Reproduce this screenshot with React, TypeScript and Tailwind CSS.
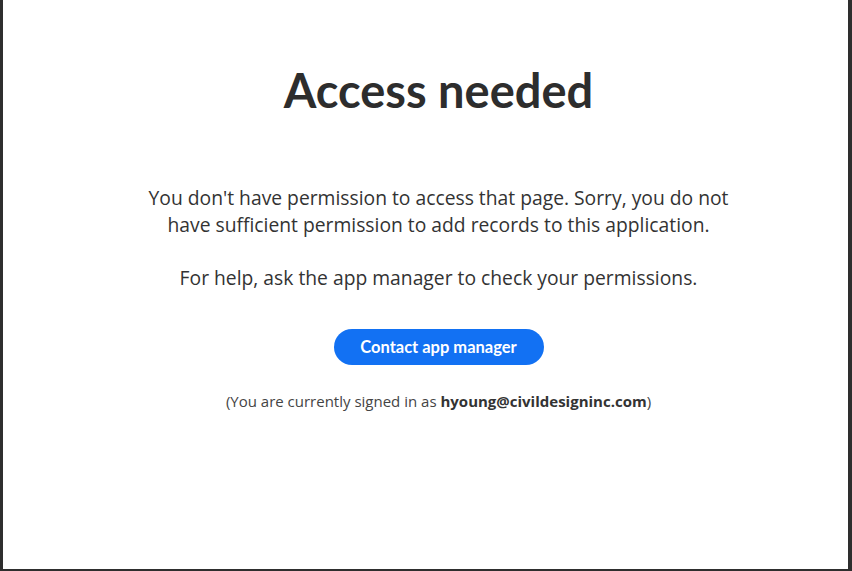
const App = () => {
  return (
    <div className="h-[571px] w-full border-l-[3px] border-r-[4px] border-b-2 border-[#2e2e2e] bg-white font-['Open_Sans',sans-serif] text-[#333]">
      <div className="flex flex-col items-center pl-[26px] pt-[61px] text-center">
        <h1 className="font-['Lato',sans-serif] text-[47px] font-bold leading-[58px] text-[#2d2d2d]">
          Access needed
        </h1>
        <p className="mt-[65px] w-[600px] text-[19.3px] leading-[27px]">
          You don't have permission to access that page. Sorry, you do not have
          sufficient permission to add records to this application.
        </p>
        <p className="mt-[26px] text-[19.3px] leading-[27px]">
          For help, ask the app manager to check your permissions.
        </p>
        <button
          type="button"
          className="mt-[38px] h-9 w-[210px] rounded-full bg-[#1271f3] font-['Lato',sans-serif] text-[16.5px] font-bold text-white"
        >
          Contact app manager
        </button>
        <p className="mt-[26px] text-[15px] leading-5 text-[#444]">
          (You are currently signed in as{" "}
          <span className="font-bold text-[#333]">hyoung@civildesigninc.com</span>)
        </p>
      </div>
    </div>
  );
};
export default App;
